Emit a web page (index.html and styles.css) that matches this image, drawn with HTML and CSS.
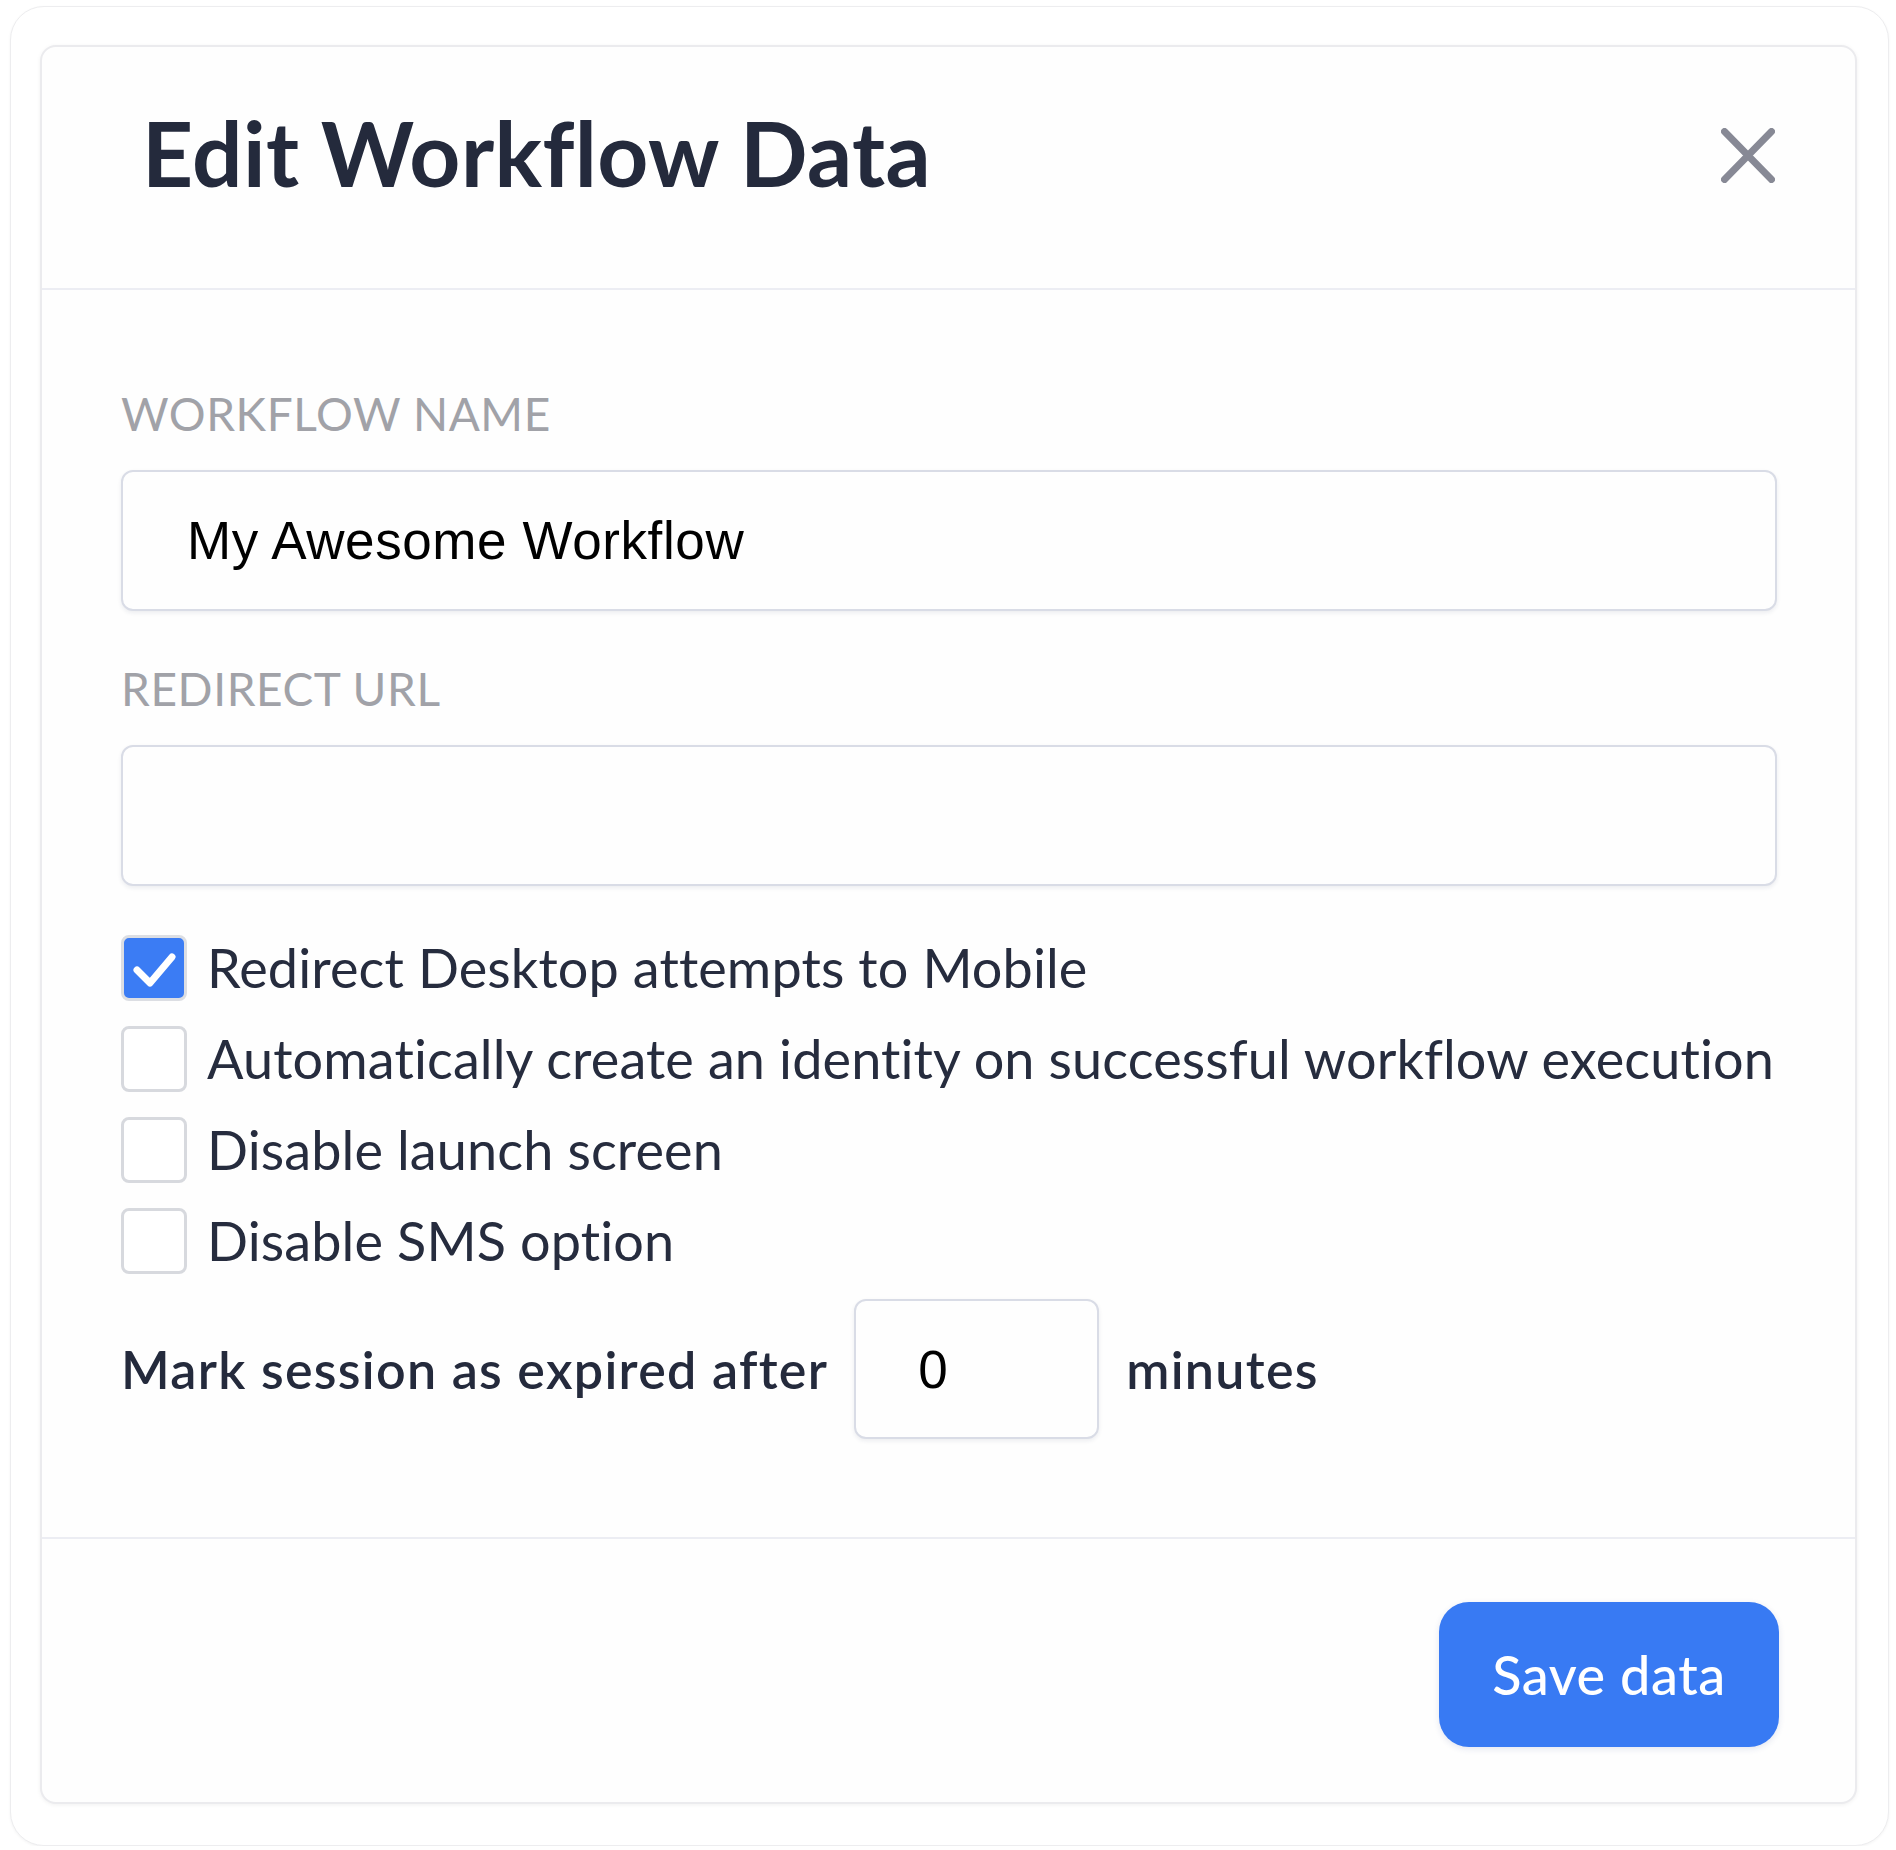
FILE: index.html
```html
<!DOCTYPE html>
<html lang="en">
<head>
<meta charset="utf-8">
<title>Edit Workflow Data</title>
<link rel="stylesheet" href="styles.css">
</head>
<body>
<div class="frame">
  <div class="card">
    <header class="card-head">
      <h1 class="title">Edit Workflow Data</h1>
      <button class="close" type="button" aria-label="Close">
        <svg width="54" height="55" viewBox="0 0 54 55"><path d="M3.5 3.5 L50.5 51.5 M50.5 3.5 L3.5 51.5" fill="none" stroke="#878995" stroke-width="7" stroke-linecap="round"/></svg>
      </button>
    </header>
    <div class="card-body">
      <label class="field-label">WORKFLOW NAME</label>
      <input class="text-input first" type="text" value="My Awesome Workflow">
      <label class="field-label">REDIRECT URL</label>
      <input class="text-input" type="text" value="">
      <ul class="checks">
        <li class="check"><span class="box checked"><svg width="60" height="60" viewBox="0 0 60 60"><path d="M13 32 L26 45 L48 19" fill="none" stroke="#fff" stroke-width="7" stroke-linecap="round" stroke-linejoin="round"/></svg></span><span class="check-label">Redirect Desktop attempts to Mobile</span></li>
        <li class="check"><span class="box"></span><span class="check-label">Automatically create an identity on successful workflow execution</span></li>
        <li class="check"><span class="box"></span><span class="check-label">Disable launch screen</span></li>
        <li class="check"><span class="box"></span><span class="check-label">Disable SMS option</span></li>
      </ul>
      <div class="expire-row">
        <span class="expire-text">Mark session as expired after</span>
        <input class="num-input" type="text" value="0">
        <span class="expire-text">minutes</span>
      </div>
    </div>
    <footer class="card-foot">
      <button class="save" type="button">Save data</button>
    </footer>
  </div>
</div>
</body>
</html>
```

FILE: styles.css
```css
html, body {
  margin: 0;
  padding: 0;
  background: #ffffff;
}

body {
  font-family: Lato, "Noto Sans", "Liberation Sans", sans-serif;
}

.frame {
  box-sizing: border-box;
  width: 1879px;
  height: 1840px;
  margin: 6px 0 0 10px;
  padding: 38px 0 0 29px;
  border: 1px solid #ededef;
  border-radius: 34px;
  background: #ffffff;
  box-shadow: 0 1px 3px rgba(0, 0, 0, 0.05);
}

.card {
  box-sizing: border-box;
  width: 1817px;
  border: 2px solid #ebebee;
  border-radius: 16px;
  background: #fefefe;
  box-shadow: 0 1px 4px rgba(0, 0, 0, 0.06);
}

.card-head {
  box-sizing: border-box;
  height: 243px;
  display: flex;
  align-items: center;
  justify-content: space-between;
  padding: 0 80px 30px 100px;
  border-bottom: 2px solid #ecedf3;
}

.title {
  margin: 0;
  font-size: 89px;
  line-height: 1;
  font-weight: 700;
  letter-spacing: 0.4px;
  color: #242a3c;
}

.close {
  margin: 6px 0 0 0;
  padding: 0;
  border: 0;
  background: none;
  display: block;
  line-height: 0;
}

.card-body {
  padding: 101px 78px 98px 79px;
}

.field-label {
  display: block;
  font-size: 46px;
  line-height: 46px;
  letter-spacing: 0.6px;
  color: #a1a2a8;
  margin-bottom: 33px;
}

.text-input {
  display: block;
  box-sizing: border-box;
  width: 100%;
  height: 141px;
  padding: 0 64px;
  border: 2px solid #d9dce6;
  border-radius: 12px;
  background: #fefefe;
  box-shadow: 0 2px 4px rgba(30, 40, 80, 0.08);
  font-family: "Liberation Sans", Arial, sans-serif;
  font-size: 53px;
  letter-spacing: 0.6px;
  color: #000;
  outline: none;
}

.text-input.first {
  margin-bottom: 55px;
}

.checks {
  list-style: none;
  margin: 49px 0 0 0;
  padding: 0;
  display: flex;
  flex-direction: column;
  gap: 25px;
}

.check {
  display: flex;
  align-items: center;
  height: 66px;
}

.box {
  box-sizing: border-box;
  flex: 0 0 66px;
  width: 66px;
  height: 66px;
  border: 3px solid #d7d9de;
  border-radius: 8px;
  background: #fff;
  display: flex;
  align-items: center;
  justify-content: center;
}

.box.checked {
  background: #3b7cf4;
  border-color: #dcdee3;
}

.check-label {
  margin-left: 20px;
  font-size: 54px;
  line-height: 66px;
  letter-spacing: 0.12px;
  white-space: nowrap;
  color: #262c3e;
}

.expire-row {
  margin-top: 25px;
  display: flex;
  align-items: center;
  height: 140px;
}

.expire-text {
  font-size: 52px;
  font-weight: 600;
  letter-spacing: 1.3px;
  color: #242a3c;
}

.num-input {
  box-sizing: border-box;
  width: 245px;
  height: 140px;
  margin: 0 27px 0 26px;
  padding: 0 62px;
  border: 2px solid #d9dce6;
  border-radius: 12px;
  background: #fefefe;
  box-shadow: 0 2px 4px rgba(30, 40, 80, 0.08);
  font-family: "Liberation Sans", Arial, sans-serif;
  font-size: 53px;
  color: #000;
  outline: none;
}

.card-foot {
  display: flex;
  justify-content: flex-end;
  padding: 63px 76px 55px 0;
  border-top: 2px solid #ecedf3;
}

.save {
  width: 340px;
  height: 145px;
  border: 0;
  border-radius: 30px;
  background: #387af3;
  box-shadow: 0 2px 6px rgba(30, 60, 140, 0.12);
  color: #fff;
  font-family: Lato, "Noto Sans", sans-serif;
  font-size: 54px;
  font-weight: 500;
  letter-spacing: 0.6px;
}
```
